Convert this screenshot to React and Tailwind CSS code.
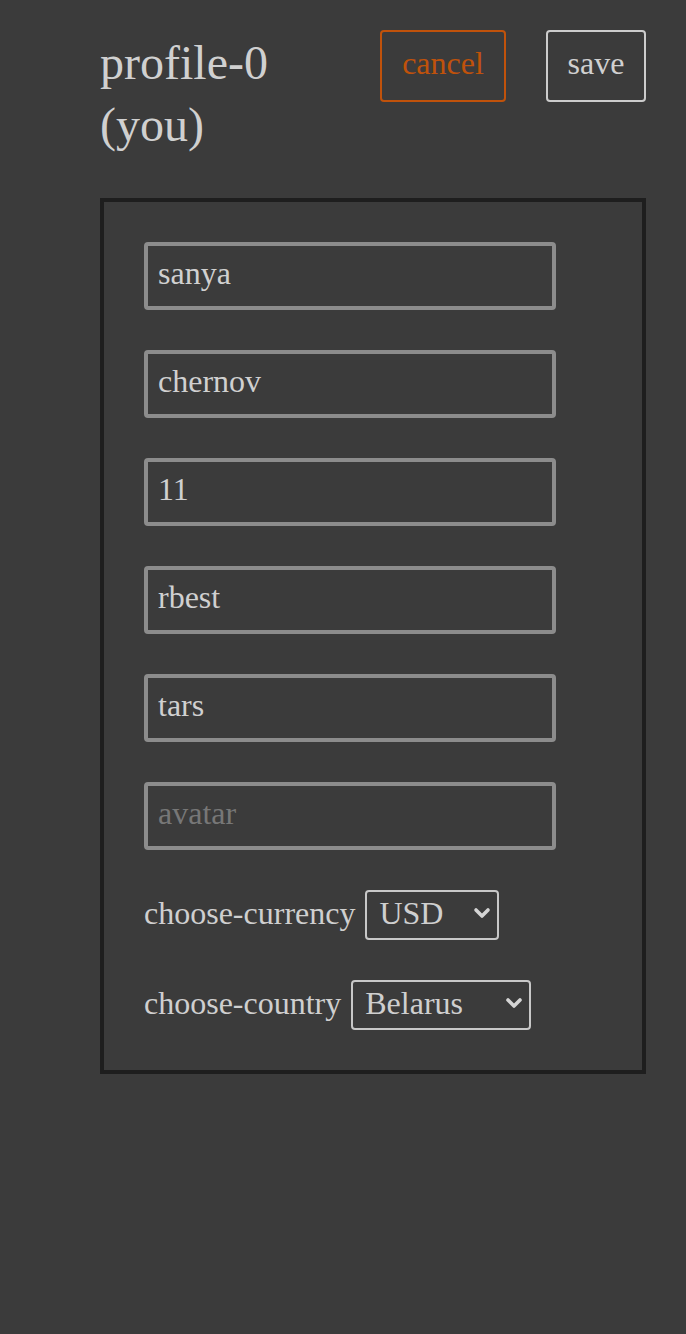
import { useState } from "react";

const fields = [
  { name: "firstName", value: "sanya", placeholder: "first-name" },
  { name: "lastName", value: "chernov", placeholder: "last-name" },
  { name: "age", value: "11", placeholder: "age" },
  { name: "login", value: "rbest", placeholder: "login" },
  { name: "password", value: "tars", placeholder: "password" },
  { name: "avatar", value: "", placeholder: "avatar" },
];

function Chevron() {
  return (
    <svg
      width="18"
      height="12"
      viewBox="0 0 18 12"
      className="pointer-events-none absolute right-[8px] top-[17px]"
    >
      <path d="M3 3 L9 9 L15 3" fill="none" stroke="#d4d4d4" strokeWidth="3.6" strokeLinecap="round" strokeLinejoin="round" />
    </svg>
  );
}

function Select({ label, value, options, width, onChange }) {
  return (
    <div className="flex items-center gap-[10px]">
      <span className="-mt-[4px] text-[32px] leading-none text-[#cfcfcf]">{label}</span>
      <div className={`relative ${width}`}>
        <select
          value={value}
          onChange={(e) => onChange(e.target.value)}
          className="h-[50px] w-full appearance-none [appearance:none] rounded-[4px] border-2 border-[#c8c8c8] bg-transparent pt-[3px] pb-[7px] pl-[12px] text-[32px] leading-[36px] text-[#cfcfcf] outline-none"
        >
          {options.map((o) => (
            <option key={o} value={o} className="bg-[#3b3b3b]">
              {o}
            </option>
          ))}
        </select>
        <Chevron />
      </div>
    </div>
  );
}

export default function App() {
  const [values, setValues] = useState(
    Object.fromEntries(fields.map((f) => [f.name, f.value]))
  );
  const [currency, setCurrency] = useState("USD");
  const [country, setCountry] = useState("Belarus");

  return (
    <div
      className="min-h-[1334px] bg-[#3b3b3b] pl-[100px] pr-[40px] pt-[30px]"
      style={{ fontFamily: '"Liberation Serif", "Times New Roman", serif' }}
    >
      {/* header */}
      <div className="flex items-start">
        <h1 className="w-[230px] pt-[2px] text-[48px] font-normal leading-[62px] text-[#d0d0d0]">
          profile-0 (you)
        </h1>
        <div className="ml-auto flex gap-[40px]">
          <button className="h-[72px] w-[126px] rounded-[4px] border-2 border-[#c0520b] pb-[6px] text-[32px] text-[#c0520b]">
            cancel
          </button>
          <button className="h-[72px] w-[100px] rounded-[4px] border-2 border-[#cccccc] pb-[6px] text-[32px] text-[#d0d0d0]">
            save
          </button>
        </div>
      </div>

      {/* form card */}
      <div className="mt-[42px] flex flex-col gap-[40px] border-4 border-[#1e1e1e] p-[40px]">
        {fields.map((f) => (
          <input
            key={f.name}
            value={values[f.name]}
            placeholder={f.placeholder}
            onChange={(e) => setValues((prev) => ({ ...prev, [f.name]: e.target.value }))}
            className="h-[68px] w-[412px] rounded-[4px] border-4 border-[#8c8c8c] bg-transparent px-[10px] pb-[6px] text-[32px] text-[#d0d0d0] outline-none placeholder:text-[#777777]"
          />
        ))}
        <Select
          label="choose-currency"
          value={currency}
          options={["USD", "EUR", "BYN", "RUB"]}
          width="w-[134px]"
          onChange={setCurrency}
        />
        <Select
          label="choose-country"
          value={country}
          options={["Belarus", "Russia", "Ukraine", "Poland"]}
          width="w-[180px]"
          onChange={setCountry}
        />
      </div>
    </div>
  );
}
